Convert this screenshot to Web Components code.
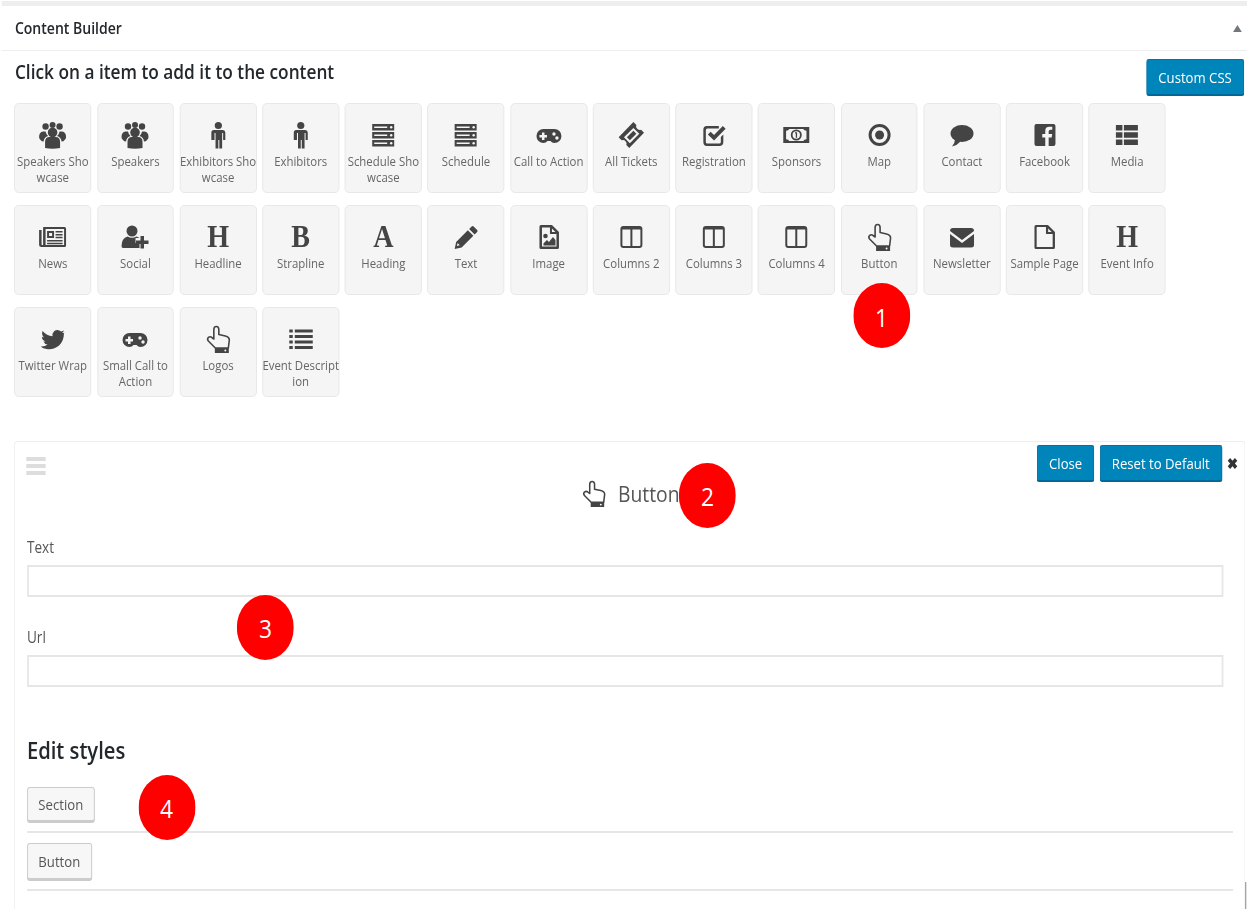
<!DOCTYPE html>
<html>
<head>
<meta charset="utf-8">
<title>Content Builder</title>
<style>
  html, body { margin: 0; padding: 0; background: #fff; overflow: hidden; }
  body { font-family: "Open Sans", "Liberation Sans", sans-serif; color: #444; }
</style>
</head>
<body>

<cb-page>
  <cb-panel-head>Content Builder</cb-panel-head>
  <cb-toolbar>
    <span slot="title">Click on a item to add it to the content</span>
    <cb-button slot="action" kind="primary">Custom CSS</cb-button>
  </cb-toolbar>

  <cb-grid>
    <cb-tile icon="users">Speakers Sho<br>wcase</cb-tile>
    <cb-tile icon="users">Speakers</cb-tile>
    <cb-tile icon="male">Exhibitors Sho<br>wcase</cb-tile>
    <cb-tile icon="male">Exhibitors</cb-tile>
    <cb-tile icon="server">Schedule Sho<br>wcase</cb-tile>
    <cb-tile icon="server">Schedule</cb-tile>
    <cb-tile icon="gamepad">Call to Action</cb-tile>
    <cb-tile icon="ticket">All Tickets</cb-tile>
    <cb-tile icon="check">Registration</cb-tile>
    <cb-tile icon="money">Sponsors</cb-tile>
    <cb-tile icon="dot">Map</cb-tile>
    <cb-tile icon="comment">Contact</cb-tile>
    <cb-tile icon="facebook">Facebook</cb-tile>
    <cb-tile icon="thlist">Media</cb-tile>

    <cb-tile icon="news">News</cb-tile>
    <cb-tile icon="userplus">Social</cb-tile>
    <cb-tile glyph="H">Headline</cb-tile>
    <cb-tile glyph="B">Strapline</cb-tile>
    <cb-tile glyph="A">Heading</cb-tile>
    <cb-tile icon="pencil">Text</cb-tile>
    <cb-tile icon="image">Image</cb-tile>
    <cb-tile icon="columns">Columns 2</cb-tile>
    <cb-tile icon="columns">Columns 3</cb-tile>
    <cb-tile icon="columns">Columns 4</cb-tile>
    <cb-tile icon="hand">Button</cb-tile>
    <cb-tile icon="envelope">Newsletter</cb-tile>
    <cb-tile icon="file">Sample Page</cb-tile>
    <cb-tile glyph="H">Event Info</cb-tile>

    <cb-tile icon="twitter">Twitter Wrap</cb-tile>
    <cb-tile icon="gamepad">Small Call to<br>Action</cb-tile>
    <cb-tile icon="hand">Logos</cb-tile>
    <cb-tile icon="list">Event Descript<br>ion</cb-tile>
  </cb-grid>

  <cb-editor heading="Button" icon="hand">
    <cb-button slot="actions" kind="primary">Close</cb-button>
    <cb-button slot="actions" kind="primary">Reset to Default</cb-button>
    <cb-field>Text</cb-field>
    <cb-field>Url</cb-field>
    <cb-styles>
      <cb-button>Section</cb-button>
      <cb-button style="--btn-h:37px">Button</cb-button>
    </cb-styles>
  </cb-editor>

  <cb-marker style="left:972.6px;top:282px">1</cb-marker>
  <cb-marker style="left:774.2px;top:461.5px">2</cb-marker>
  <cb-marker style="left:270.2px;top:593.5px">3</cb-marker>
  <cb-marker style="left:157.5px;top:773.5px">4</cb-marker>
</cb-page>

<script>
(function () {

    // all icons drawn on a 28x28 box, fill comes from currentColor
    const ICONS = {
        users: `<circle cx="7" cy="5.5" r="3.2"/><circle cx="14" cy="4" r="3"/><circle cx="21" cy="5.5" r="3.2"/>
                <circle cx="14" cy="11.5" r="4.8"/>
                <path d="M6.5 27v-6q0-5 4.5-5h6q4.500 0 4.500 5v6q-7.500 1.500-15 0z"/>
                <path d="M2 19q-1.500-1-1.500-3 0-5 4-5.500h2.500q.5 3 2.500 4.500-4 1-4.500 5.500-2 0-3-1.500zM26 19q1.500-1 1.500-3 0-5-4-5.500H21q-.5 3-2.500 4.500 4 1 4.500 5.500 2 0 3-1.500z"/>`,
        male: `<circle cx="14" cy="4.500" r="3.600"/>
               <path d="M9.500 9h9q2.500 0 2.500 2.500V19h-2.200v-7h-1v15.500h-2.800V19h-1v8.500h-2.800V12h-1v7H7v-7.500Q7 9 9.500 9z"/>`,
        server: `<path d="M3 3h22v6.500H3zM3 11h22v6.500H3zM3 19h22v6.500H3z"/>
                 <path fill="#f5f5f5" d="M5 5.500h13v1.500H5zM5 13.500h13V15H5zM5 21.500h13V23H5z"/>
                 <circle fill="#f5f5f5" cx="22" cy="6.200" r="1.200"/><circle fill="#f5f5f5" cx="22" cy="14.200" r="1.200"/><circle fill="#f5f5f5" cx="22" cy="22.200" r="1.200"/>`,
        gamepad: `<path d="M8.500 8h11a7 7 0 0 1 0 14q-2.500 0-4-2h-3q-1.500 2-4 2a7 7 0 0 1 0-14z"/>
                  <path fill="#f5f5f5" d="M7 11.500h2.500V14H12v2.500H9.500V19H7v-2.500H4.500V14H7z"/>
                  <circle fill="#f5f5f5" cx="19" cy="13" r="1.700"/><circle fill="#f5f5f5" cx="22" cy="17" r="1.700"/>`,
        ticket: `<g transform="translate(14 14) scale(1.18) translate(-13.800 -13.500)">
                 <path d="M15.500 2.500 18 5q-.8 2 .7 3.300 1.300 1.500 3.300.7l2.500 2.500L12 24.500 9.500 22q.8-2-.7-3.300Q7.500 17.200 5.500 18L3 15.500z"/>
                 <path fill="#f5f5f5" d="m15.500 7.500 5 5-8 8-5-5z"/>
                 <path d="m15.500 10 2.500 2.500-5.500 5.500L10 15.500z"/></g>`,
        check: `<path d="M7 5h12v2.500H7.500q-1.500 0-1.500 1.500v12q0 1.500 1.500 1.500h12q1.500 0 1.500-1.500v-5l2.500-2.500V21q0 4-4 4H7q-3.500 0-3.500-4V8.500Q3.500 5 7 5z"/>
                <path d="m8 13.500 2.800-2.800 3.400 3.400L23 5l2.800 2.800L14.200 19.500z"/>`,
        money: `<path fill-rule="evenodd" d="M1 6h26v16H1zM3.800 9.800v8.400q2.500 0 3.200 1.800h14q.7-1.800 3.200-1.800V9.800Q21.700 9.800 21 8H7q-.7 1.800-3.200 1.800z"/>
                <path fill-rule="evenodd" d="M14 8.500a5.500 5.500 0 0 1 0 11 5.500 5.500 0 0 1 0-11zm0 1.800a3.700 3.700 0 0 0 0 7.400 3.700 3.700 0 0 0 0-7.400z"/>
                <path d="M12.800 11.300h2v5.400h-1.300v-4.200h-.7z"/>`,
        dot: `<path fill-rule="evenodd" d="M14 3a11 11 0 1 1 0 22 11 11 0 0 1 0-22zm0 3a8 8 0 1 0 0 16 8 8 0 0 0 0-16z"/><circle cx="14" cy="14" r="4.500"/>`,
        comment: `<ellipse cx="14" cy="12.500" rx="11.500" ry="8.500"/><path d="M7 18q0 4-3 7.500 5-1 8.500-5z"/>`,
        facebook: `<path d="M6 3h17q2 0 2 2v18q0 2-2 2h-4.800v-8.500h3l.5-3.500h-3.500V10.500q0-1.700 1.800-1.700h1.800V5.700h-3q-4 0-4 4.200V13h-3v3.500h3V25H6q-2 0-2-2V5q0-2 2-2z"/>`,
        thlist: `<path d="M3 4h6.500v5.500H3zM11 4h14v5.500H11zM3 11.200h6.500v5.500H3zM11 11.200h14v5.500H11zM3 18.500h6.500V24H3zM11 18.500h14V24H11z"/>`,
        news: `<path fill-rule="evenodd" d="M4.500 4H26q1.500 0 1.500 1.500v17Q27.500 24 26 24H3q-2.500 0-2.500-2.500V7h2.500v14.500q0 .5.500.5h1V5q0-1 .5-1zM7 6v16h18.500V6z"/>
               <path fill-rule="evenodd" d="M8.500 8h7v7h-7zM10.500 10v3h3v-3z"/>
               <path d="M17 8h7v1.500h-7zM17 11h7v1.500h-7zM17 13.700h7v1.500h-7zM8.500 17h15.500v1.500H8.500zM8.500 19.700h15.500v1.500H8.500z"/>`,
        userplus: `<circle cx="11" cy="8" r="5.500"/>
                   <path d="M2 25q-1.500 0-1.500-2 0-8 6-9.500 4.500 2.500 9 0 2 .5 3 1.500h-4v5h4v5z"/>
                   <path d="M19.500 13h3.500v4.500h4.500V21H23v4.500h-3.500V21H15v-3.500h4.500z"/>`,
        pencil: `<path fill-rule="evenodd" d="M20 3.500q1-1 2 0l3.500 3.500q1 1 0 2L23 11.500 17.500 6zM16.200 7.300l5.500 5.500L10 24.500 3 26l1.500-7zM6 20l-.8 2.900 2.900-.7z"/>`,
        image: `<path fill-rule="evenodd" d="M6 2h11l7 7v15.500q0 1.500-1.500 1.500H6q-1.500 0-1.500-1.500v-21Q4.500 2 6 2zm1 2.500v19h14.500V11H15V4.500zm10 1v3.500h3.500z"/>
                <circle cx="10.500" cy="13" r="2.300"/><path d="M8.500 22.500v-2l3.500-3.500 2 2 4-5 2.500 3v5.500z"/>`,
        columns: `<path fill-rule="evenodd" d="M6 3h16q3 0 3 3v16q0 3-3 3H6q-3 0-3-3V6q0-3 3-3zM5 6.500V22q0 1 1 1h7V6.500zm10 0V23h7q1 0 1-1V6.500z"/>`,
        hand: `<path fill="none" stroke="currentColor" stroke-width="1.600" stroke-linejoin="round" d="M9.500 14V4.500Q9.500 1.500 12 1.500T14.500 4.500V9.500L21 11Q25 12 25 15L24 23H11L4 16Q2.500 14 4 12.500 6 11 7.500 12.500z"/>
               <path fill-rule="evenodd" d="M10.500 23h14v5h-14zM21 24.500a1 1 0 1 0 0 2 1 1 0 0 0 0-2z"/>`,
        envelope: `<path d="M5 5h18q3 0 3 3l-12 9L2 8q0-3 3-3zM2 11l12 9 12-9v11q0 2.500-3 2.500H5q-3 0-3-2.500z"/>`,
        file: `<path fill-rule="evenodd" d="M5.500 2h12l7 7v15.500q0 1.500-1.500 1.500H5.500Q4 26 4 24.500v-21Q4 2 5.500 2zm.700 2v20h16V11h-6.700V4zm11.500 1.500V9h3.500z"/>`,
        twitter: `<path d="M25.500 8q-.2 0-.2 1 0 7-4.800 11.500-5.300 4.500-12.500 3.500-3.500-.5-6-2.500 4 .4 7-2-3-.2-4.200-3 1.200.2 2.200-.2-3.500-.8-3.800-4.500 1 .6 2.200.6Q2.500 9.500 4 6q4 4.800 10 5.200-.5-3 1.500-5 2.500-2 5.300-.8l1.700 1.100q1.500-.3 2.800-1-.5 1.500-1.800 2.500 1.200-.1 2.500-.6Q25.500 7 25.500 8z"/>`,
        list: `<path d="M2.500 4.500H6v3H2.500zM8 4.500h18v3H8zM2.500 10H6v3H2.500zM8 10h18v3H8zM2.500 15.500H6v3H2.500zM8 15.500h18v3H8zM2.500 21H6v3H2.500zM8 21h18v3H8z"/>`
    };

    function define(name, css, html, setup) {
        class El extends HTMLElement {
            constructor() {
                super();
                this.attachShadow({ mode: 'open' });
                this.shadowRoot.innerHTML = `<style>${css}</style>${typeof html === 'function' ? html(this) : html}`;
            }
            connectedCallback() {
                if (setup) setup(this);
            }
        }
        customElements.get(name) || customElements.define(name, El);
    }

    const sans = `font-family: "Open Sans", "Liberation Sans", sans-serif;`;

    define('cb-icon', `
        :host { display: inline-block; width: calc(var(--icon-size, 28px) * 1.14); height: var(--icon-size, 28px); color: #444; }
        svg { display: block; width: 100%; height: 100%; fill: currentColor; }
    `, '<svg viewBox="0 0 28 28" preserveAspectRatio="none"></svg>', (el) => {
        el.shadowRoot.querySelector('svg').innerHTML = ICONS[el.getAttribute('name')] || '';
    });

    // the whole shot is squeezed horizontally, so the canvas is laid out wider and scaled back
    define('cb-page', `
        :host { display: block; width: 1247px; height: 909px; overflow: hidden; background: #fff; }
        .canvas { position: relative; width: 1422px; height: 909px; transform: scaleX(.877); transform-origin: 0 0; }
    `, '<div class="canvas"><slot></slot></div>');

    define('cb-panel-head', `
        :host { display: block; margin: 1px 0 0 2px; border-top: 5px solid #eee; border-bottom: 1px solid #eee; }
        .row { display: flex; justify-content: space-between; align-items: center; height: 44px; padding: 0 6px 0 15px; }
        .title { ${sans} font-size: 16px; font-weight: 600; color: #23282d; }
        .arrow { width: 0; height: 0; border-left: 5px solid transparent; border-right: 5px solid transparent; border-bottom: 7px solid #72777c; }
    `, `<div class="row"><span class="title"><slot></slot></span><span class="arrow"></span></div>`);

    define('cb-toolbar', `
        :host { display: flex; justify-content: space-between; align-items: flex-start; padding: 8px 3.400px 7px 17px; }
        .title { ${sans} font-size: 19.700px; font-weight: 600; color: #23282d; line-height: 26px; }
    `, `<div class="title"><slot name="title"></slot></div><slot name="action"></slot>`);

    define('cb-button', `
        :host { display: inline-block; }
        button { ${sans} display: block; font-size: 15px; line-height: 1; height: var(--btn-h, 35px); padding: 0 12px; border-radius: 3px; cursor: pointer;
                 color: #555; background: #f7f7f7; border: 1px solid #ccc; border-bottom-width: 2px; box-shadow: 0 1px 0 #ccc; }
        :host([kind="primary"]) button { color: #fff; background: #0085ba; border-color: #0073aa #006799 #006799; box-shadow: none; height: 37px; padding: 0 13px; }
    `, '<button type="button"><slot></slot></button>');

    define('cb-grid', `
        :host { display: grid; grid-template-columns: repeat(14, 87.800px); grid-auto-rows: 90px; column-gap: 6.440px; row-gap: 12px; padding-left: 16.300px; }
    `, '<slot></slot>');

    define('cb-tile', `
        :host { display: block; box-sizing: border-box; border: 1px solid #e6e6e6; border-radius: 5px; background: #f5f5f5; text-align: center; padding-top: 16px; }
        .icon { height: 29px; display: flex; justify-content: center; align-items: center; }
        .glyph { font-family: "Liberation Serif", serif; font-weight: 700; font-size: 32px; line-height: 29px; color: #444; }
        .label { ${sans} margin: 4px -3px 0; font-size: 13px; line-height: 16px; color: #666; white-space: nowrap; }
    `, (el) => {
        const glyph = el.getAttribute('glyph');
        const icon = glyph ? `<span class="glyph">${glyph}</span>` : `<cb-icon name="${el.getAttribute('icon')}"></cb-icon>`;
        return `<div class="icon">${icon}</div><div class="label"><slot></slot></div>`;
    });

    define('cb-editor', `
        :host { display: block; position: relative; box-sizing: border-box; width: 1403.700px; height: 470px; margin: 44px 0 0 16px; padding: 3px 12.500px 0 13.700px;
                border: 1px solid #eee; border-bottom: 0; border-radius: 4px 4px 0 0; }
        :host::after { content: ""; position: absolute; right: -2px; top: 440px; width: 1px; height: 30px; background: #777; }
        header { display: grid; grid-template-columns: 1fr auto 1fr; height: 91px; }
        .handle { display: flex; flex-direction: column; gap: 3px; width: 22px; margin: 12px 0 0 -1px; }
        .handle i { display: block; height: 4px; background: #ddd; }
        .title { display: flex; align-items: center; gap: 12px; height: 44px; margin-top: 26px; ${sans} font-size: 22px; color: #555; }
        .actions { display: flex; justify-content: flex-end; align-items: flex-start; gap: 5.700px; margin-right: -6px; }
        .close { ${sans} font-size: 15px; font-weight: 700; color: #333; margin: 9px 0 0 0; line-height: 18px; }
    `, (el) => `
        <header>
            <div class="handle"><i></i><i></i><i></i></div>
            <div class="title"><cb-icon name="${el.getAttribute('icon')}" style="--icon-size:27px"></cb-icon>${el.getAttribute('heading')}</div>
            <div class="actions"><slot name="actions"></slot><span class="close">&#10006;</span></div>
        </header>
        <slot></slot>
    `);

    define('cb-field', `
        :host { display: block; margin-bottom: 29px; width: 1364px; }
        label { ${sans} display: block; font-size: 15.500px; line-height: 22px; margin: 0 0 7px; color: #555; }
        input { display: block; box-sizing: border-box; width: 100%; height: 32px; border: 2px solid #e6e6e6; background: #fff; outline: 0; }
    `, '<label><slot></slot></label><input type="text">');

    define('cb-styles', `
        :host { display: block; margin-top: 48px; }
        h2 { ${sans} font-size: 23px; font-weight: 600; line-height: 30px; margin: 0 0 22px; color: #23282d; }
        .rows { display: flex; flex-direction: column; }
    `, '<h2>Edit styles</h2><div class="rows"><slot></slot></div>', (el) => {
        // each button sits on its own row with a rule below it
        el.querySelectorAll('cb-button').forEach((b) => {
            if (b.parentElement.tagName === 'CB-STYLE-ROW') return;
            const row = document.createElement('cb-style-row');
            b.replaceWith(row);
            row.appendChild(b);
        });
    });

    define('cb-style-row', `
        :host { display: block; width: 1375px; padding-bottom: 9px; margin-bottom: 10px; border-bottom: 2px solid #e6e6e6; }
        ::slotted(cb-button) { display: block; width: fit-content; }
    `, '<slot></slot>');

    define('cb-marker', `
        :host { display: flex; position: absolute; justify-content: center; align-items: center; box-sizing: border-box; padding-top: 2px; width: 65px; height: 65px; border-radius: 50%; background: #f00; color: #fff;
                ${sans} font-size: 26px; }
    `, '<slot></slot>');

})();
</script>
</body>
</html>
